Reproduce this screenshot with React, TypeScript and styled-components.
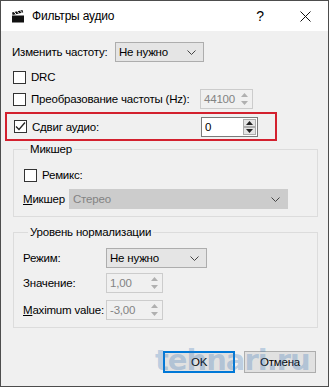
import React from "react";
import styled, { createGlobalStyle } from "styled-components";

const GlobalStyle = createGlobalStyle`
  html, body {
    margin: 0;
    padding: 0;
    background: #f0f0f0;
  }
  * {
    box-sizing: border-box;
  }
`;

const Window = styled.div`
  position: relative;
  width: 329px;
  height: 387px;
  border: 1px solid #4d4d4d;
  background: #f0f0f0;
  font-family: "Liberation Sans", Arial, sans-serif;
  font-size: 11.5px;
  letter-spacing: -0.2px;
  color: #000;
  display: flex;
  flex-direction: column;
  overflow: hidden;
`;

const TitleBar = styled.div`
  height: 30px;
  background: #fff;
  display: flex;
  align-items: center;
  padding-left: 10px;
  flex-shrink: 0;
`;

const Title = styled.div`
  margin-left: 7px;
  flex: 1;
  font-size: 12px;
`;

const TitleButton = styled.div<{ $w: number }>`
  width: ${(p) => p.$w}px;
  height: 30px;
  display: flex;
  align-items: center;
  justify-content: center;
  font-size: 14px;
`;

const Body = styled.div`
  flex: 1;
  display: flex;
  flex-direction: column;
  padding: 0 11px 0 11px;
`;

const Row = styled.div<{ $mt: number; $h?: number }>`
  display: flex;
  align-items: center;
  margin-top: ${(p) => p.$mt}px;
  height: ${(p) => p.$h ?? 20}px;
`;

const Highlight = styled.div`
  display: flex;
  align-items: center;
  margin: 3px 0 0 -7px;
  width: 272px;
  height: 29px;
  border: 2px solid #d3202e;
  padding-left: 6px;
`;

const Label = styled.span<{ $w?: number }>`
  ${(p) => (p.$w ? `width: ${p.$w}px; flex-shrink: 0;` : "")}
  white-space: nowrap;
`;

const Mnemonic = styled.span`
  text-decoration: underline;
`;

const CheckBox = styled.span`
  width: 13px;
  height: 13px;
  border: 1px solid #333;
  background: #fff;
  margin: 0 5px 0 1px;
  flex-shrink: 0;
  display: inline-flex;
  align-items: center;
  justify-content: center;
`;

const Combo = styled.div<{ $w: number; $disabled?: boolean }>`
  width: ${(p) => p.$w}px;
  height: 20px;
  border: 1px solid ${(p) => (p.$disabled ? "#cccccc" : "#adadad")};
  background: ${(p) => (p.$disabled ? "#cccccc" : "#e5e5e5")};
  color: ${(p) => (p.$disabled ? "#838383" : "#000")};
  display: flex;
  align-items: center;
  justify-content: space-between;
  padding: 0 7px 0 3px;
  flex-shrink: 0;
`;

const Spin = styled.div<{ $w: number; $disabled?: boolean }>`
  width: ${(p) => p.$w}px;
  height: 20px;
  border: 1px solid ${(p) => (p.$disabled ? "#cccccc" : "#7a7a7a")};
  background: ${(p) => (p.$disabled ? "#f0f0f0" : "#fff")};
  color: ${(p) => (p.$disabled ? "#838383" : "#000")};
  display: flex;
  align-items: center;
  padding-left: 3px;
  flex-shrink: 0;
`;

const SpinText = styled.span`
  flex: 1;
`;

const SpinButtons = styled.div`
  width: 15px;
  height: 100%;
  display: flex;
  flex-direction: column;
  padding: 1px;
`;

const SpinButton = styled.div<{ $enabled?: boolean }>`
  flex: 1;
  display: flex;
  align-items: center;
  justify-content: center;
  border: 1px solid ${(p) => (p.$enabled ? "#adadad" : "transparent")};
  background: ${(p) => (p.$enabled ? "#e5e5e5" : "transparent")};
`;

const Group = styled.fieldset<{ $mt: number }>`
  margin: ${(p) => p.$mt}px 0 0 1px;
  width: 305px;
  border: 1px solid #dcdcdc;
  padding: 0 0 0 9px;
  min-width: 0;
`;

const Legend = styled.legend`
  padding: 0 2px;
  margin-left: 5px;
  line-height: 16px;
`;

const Spacer = styled.div`
  height: 7px;
`;

const Buttons = styled.div`
  display: flex;
  justify-content: flex-end;
  gap: 9px;
  margin-top: 23px;
  padding-right: 1px;
`;

const Button = styled.div<{ $default?: boolean }>`
  width: 72px;
  height: 22px;
  background: #e1e1e1;
  border: ${(p) => (p.$default ? "2px solid #0078d7" : "1px solid #adadad")};
  display: flex;
  align-items: center;
  justify-content: center;
`;

const Watermark = styled.div`
  position: absolute;
  left: 154px;
  top: 342px;
  font-family: "DejaVu Sans", sans-serif;
  font-weight: bold;
  font-size: 29px;
  letter-spacing: -1px;
  color: rgba(60, 120, 185, 0.3);
  pointer-events: none;
`;

const Arrow = () => (
  <svg width="9" height="5" viewBox="0 0 9 5">
    <path d="M0.5 0.5 L4.5 4.5 L8.5 0.5" fill="none" stroke="#444" strokeWidth="1" />
  </svg>
);

const Tri = ({ up, color }: { up?: boolean; color: string }) => (
  <svg width="7" height="4" viewBox="0 0 7 4">
    <path d={up ? "M0 4 L3.5 0 L7 4 Z" : "M0 0 L7 0 L3.5 4 Z"} fill={color} />
  </svg>
);

const Check = () => (
  <svg width="11" height="11" viewBox="0 0 11 11">
    <path d="M1 5.5 L4 8.5 L10 1.5" fill="none" stroke="#222" strokeWidth="1.3" />
  </svg>
);

const SpinBox = ({
  value,
  w,
  disabled,
}: {
  value: string;
  w: number;
  disabled?: boolean;
}) => (
  <Spin $w={w} $disabled={disabled}>
    <SpinText>{value}</SpinText>
    <SpinButtons>
      <SpinButton $enabled={!disabled}>
        <Tri up color={disabled ? "#b0b0b0" : "#222"} />
      </SpinButton>
      <SpinButton $enabled={!disabled}>
        <Tri color={disabled ? "#b0b0b0" : "#222"} />
      </SpinButton>
    </SpinButtons>
  </Spin>
);

const ClapIcon = () => (
  <svg width="14" height="13" viewBox="0 0 14 13">
    <path d="M1 2.5 L11.5 0 L12.2 2.4 L1.6 4.9 Z" fill="#111" />
    <path d="M3.2 1.9 L5 4.2 M6.2 1.2 L8 3.5 M9.2 0.5 L11 2.8" stroke="#fff" strokeWidth="1" />
    <rect x="1" y="5.5" width="12" height="7" fill="#111" />
  </svg>
);

const CloseIcon = () => (
  <svg width="11" height="11" viewBox="0 0 11 11">
    <path d="M0.5 0.5 L10.5 10.5 M10.5 0.5 L0.5 10.5" stroke="#111" strokeWidth="1" />
  </svg>
);

export default function App() {
  return (
    <>
      <GlobalStyle />
      <Window>
        <TitleBar>
          <ClapIcon />
          <Title>Фильтры аудио</Title>
          <TitleButton $w={44}>?</TitleButton>
          <TitleButton $w={46}>
            <CloseIcon />
          </TitleButton>
        </TitleBar>
        <Body>
          <Row $mt={11}>
            <Label $w={103}>Изменить частоту:</Label>
            <Combo $w={89}>
              <span>Не нужно</span>
              <Arrow />
            </Combo>
          </Row>
          <Row $mt={5}>
            <CheckBox />
            <Label>DRC</Label>
          </Row>
          <Row $mt={2}>
            <CheckBox />
            <Label $w={169}>Преобразование частоты (Hz):</Label>
            <SpinBox value="44100" w={53} disabled />
          </Row>
          <Highlight>
            <CheckBox>
              <Check />
            </CheckBox>
            <Label $w={169}>Сдвиг аудио:</Label>
            <SpinBox value="0" w={57} />
          </Highlight>
          <Group $mt={0}>
            <Legend>Микшер</Legend>
            <Row $mt={8}>
              <CheckBox />
              <Label>Ремикс:</Label>
            </Row>
            <Row $mt={4}>
              <Label $w={46}>
                <Mnemonic>М</Mnemonic>икшер
              </Label>
              <Combo $w={219} $disabled>
                <span>Стерео</span>
                <Arrow />
              </Combo>
            </Row>
            <Spacer />
          </Group>
          <Group $mt={7}>
            <Legend>Уровень нормализации</Legend>
            <Row $mt={8}>
              <Label $w={83}>Режим:</Label>
              <Combo $w={101}>
                <span>Не нужно</span>
                <Arrow />
              </Combo>
            </Row>
            <Row $mt={5}>
              <Label $w={83}>Значение:</Label>
              <SpinBox value="1,00" w={57} disabled />
            </Row>
            <Row $mt={7}>
              <Label $w={83}>
                <Mnemonic>M</Mnemonic>aximum value:
              </Label>
              <SpinBox value="-3,00" w={57} disabled />
            </Row>
            <Spacer />
          </Group>
          <Buttons>
            <Button $default>OK</Button>
            <Button>Отмена</Button>
          </Buttons>
        </Body>
        <Watermark>tehnari.ru</Watermark>
      </Window>
    </>
  );
}
